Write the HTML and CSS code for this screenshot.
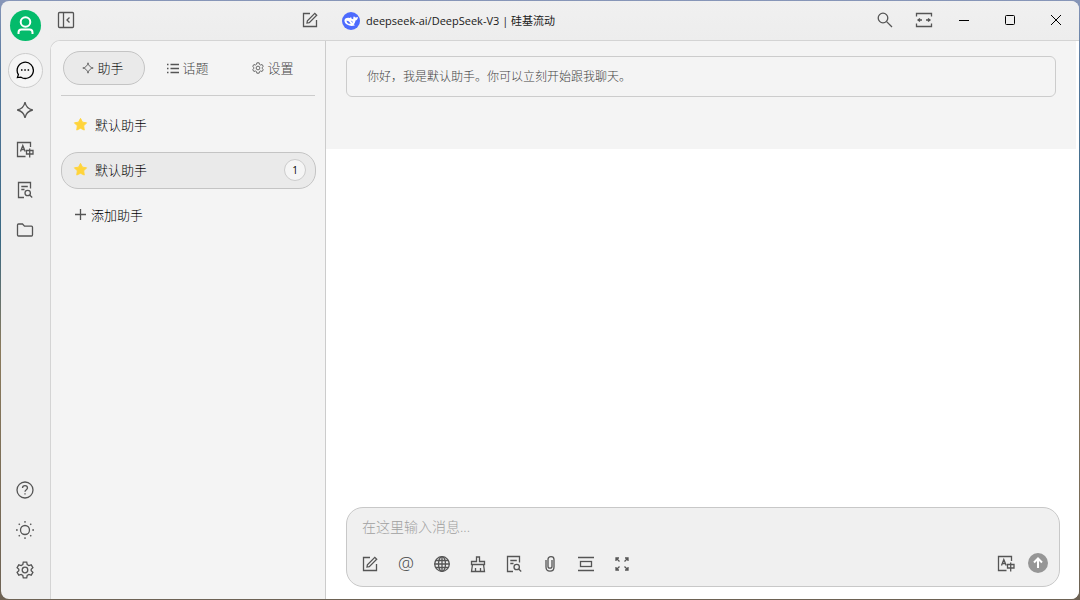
FILE: index.html
```html
<!DOCTYPE html>
<html lang="zh-CN">
<head>
<meta charset="utf-8">
<meta name="viewport" content="width=device-width, initial-scale=1">
<title>deepseek-ai/DeepSeek-V3 | 硅基流动</title>
<link rel="stylesheet" href="styles.css">
</head>
<body>
<svg class="sprite" aria-hidden="true">
  <symbol id="sparkle" viewBox="0 0 18 18"><path d="M9 1.200C9.800 5.600 12.400 8.200 16.800 9 12.400 9.800 9.800 12.400 9 16.800 8.200 12.400 5.600 9.800 1.200 9 5.600 8.200 8.200 5.600 9 1.200Z"/></symbol>
  <symbol id="translate" viewBox="0 0 18 18"><path d="M14.500 6V1.500H1.500V15.500H9.500M4.500 10.500 6.800 4.500 9.200 10.500M5.300 8.500H8.400M10.500 9.500H17V13H10.500ZM13.700 7.500V16.500"/></symbol>
  <symbol id="docsearch" viewBox="0 0 18 18"><path d="M14.500 7.500V1.500H2.500V16.500H8M5.300 5.500H11.800M5.300 8.500H8.500"/><circle cx="11.700" cy="12" r="2.700"/><path d="M13.700 14 16.200 16.500"/></symbol>
  <symbol id="gear" viewBox="0 0 18 18"><circle cx="9" cy="9" r="2.800"/><path d="M7.300 1.200H10.700L11.200 3.500 12.900 4.500 15.200 3.800 16.900 6.700 15.200 8.200V9.800L16.900 11.300 15.200 14.200 12.900 13.500 11.200 14.500 10.700 16.800H7.300L6.800 14.500 5.100 13.500 2.800 14.200 1.100 11.300 2.800 9.800V8.200L1.100 6.700 2.800 3.800 5.100 4.500 6.800 3.500Z"/></symbol>
  <symbol id="compose" viewBox="0 0 18 18"><path d="M9 2.500H2.500V15.500H15.500V9"/><path d="M6 12 6.400 9.700 13.800 2.300 15.700 4.200 8.300 11.600Z"/></symbol>
  <symbol id="star" viewBox="0 0 16 16"><path d="M8 1.500 10.100 5.500 14.500 6.200 11.400 9.400 12 13.900 8 12 4 13.900 4.600 9.400 1.500 6.200 5.900 5.500Z"/></symbol>
</svg>

<div class="window">
  <nav class="rail">
    <button class="avatar" aria-label="用户"><svg viewBox="0 0 31 31"><circle cx="15.500" cy="12" r="4.800"/><path d="M8.500 24V22.500Q8.500 19.500 11.500 19.500H19.500Q22.500 19.500 22.500 22.500V24"/></svg></button>
    <button class="rail-btn active" aria-label="聊天"><svg class="icon i20" viewBox="0 0 20 20"><path d="M2.400 17.600 3.400 14.600A8.100 8.100 0 1 1 6 17.200Z"/><path d="M6 10H7.500M9.300 10H10.800M12.600 10H14.100"/></svg></button>
    <button class="rail-btn" aria-label="智能体"><svg class="icon i18"><use href="#sparkle"/></svg></button>
    <button class="rail-btn" aria-label="翻译"><svg class="icon i18"><use href="#translate"/></svg></button>
    <button class="rail-btn" aria-label="知识库"><svg class="icon i18"><use href="#docsearch"/></svg></button>
    <button class="rail-btn" aria-label="文件"><svg class="icon i18" viewBox="0 0 18 18"><path d="M1.500 4Q1.500 3 2.500 3H6.500L8.500 5.200H15.500Q16.500 5.200 16.500 6.200V14Q16.500 15 15.500 15H2.500Q1.500 15 1.500 14Z"/></svg></button>
    <span class="spacer"></span>
    <button class="rail-btn" aria-label="帮助"><svg class="icon i18" viewBox="0 0 18 18"><circle cx="9" cy="9" r="8"/><path d="M6.500 7Q6.500 4.700 9 4.700T11.500 7C11.500 8.700 9 8.700 9 10.700M9 12.200V13.500"/></svg></button>
    <button class="rail-btn" aria-label="主题"><svg class="icon i18" viewBox="0 0 18 18"><circle cx="9" cy="9" r="4.500"/><path d="M9 0V1.700M9 16.300V18M0 9H1.700M16.300 9H18M2.700 2.700 3.800 3.800M14.200 14.200 15.300 15.300M2.700 15.300 3.800 14.200M14.200 3.800 15.300 2.700"/></svg></button>
    <button class="rail-btn" aria-label="设置"><svg class="icon i18"><use href="#gear"/></svg></button>
  </nav>

  <div class="body">
    <header class="titlebar">
      <div class="titlebar-side">
        <button class="tool" aria-label="收起侧栏"><svg class="icon i18" viewBox="0 0 18 18"><rect x="1.500" y="1.500" width="15" height="15" rx="1"/><path d="M6.500 1.500V16.500M12.500 6.500 10 9 12.500 11.500"/></svg></button>
        <button class="tool" aria-label="新建话题"><svg class="icon i18"><use href="#compose"/></svg></button>
      </div>
      <div class="titlebar-main">
        <button class="model">
          <svg class="logo" viewBox="0 0 18 18"><circle cx="9" cy="9" r="9"/><path d="M2.500 8C3.200 6 5.500 5.300 7.700 6.100L9.200 5.100C9 6.600 10.200 7.200 11.300 7.300 11 5.900 11.500 4.700 12 4.300 12.300 5.100 13 5.500 13.800 5.400L16 4.900C15.800 7.200 14.700 8.100 13.500 8.500 13.300 10.500 12.400 11.700 11.700 12.300L13 13.300C10.800 14.200 7.400 14.300 5 12.600 3.200 11.500 2.200 9.800 2.500 8Z"/><path class="cut" d="M4.500 8.700C6.400 8.500 7.500 9.800 8.700 11.700 7 12.300 4.700 11.200 4.500 8.700ZM8.600 8.200 10.700 9.700 10.500 11Z"/></svg>
          <span>deepseek-ai/DeepSeek-V3 | 硅基流动</span>
        </button>
        <div class="window-tools">
          <button class="tool" aria-label="搜索"><svg class="icon i18" viewBox="0 0 18 18"><circle cx="7" cy="7" r="4.800"/><path d="M10.600 10.600 16 16"/></svg></button>
          <button class="tool" aria-label="窄屏"><svg class="icon i18" viewBox="0 0 18 18"><path d="M1.500 5.500V2.500H16.500V5.500M1.500 12.500V15.500H16.500V12.500M3 9H7M11 9H15M5 7.500 3 9 5 10.500M13 7.500 15 9 13 10.500"/></svg></button>
        </div>
        <div class="window-controls">
          <button aria-label="最小化"><svg viewBox="0 0 12 12"><path d="M1 6.500H11"/></svg></button>
          <button aria-label="最大化"><svg viewBox="0 0 12 12"><rect x="1.500" y="1.500" width="9" height="9" rx="1"/></svg></button>
          <button aria-label="关闭"><svg viewBox="0 0 12 12"><path d="M1 1 11 11M11 1 1 11"/></svg></button>
        </div>
      </div>
    </header>

    <div class="content">
      <aside class="panel">
        <div class="tabs">
          <button class="tab selected"><svg class="icon i12"><use href="#sparkle"/></svg>助手</button>
          <button class="tab"><svg class="icon i12" viewBox="0 0 12 12"><path d="M0 2.500H1.500M0 6.500H1.500M0 10.500H1.500M3.500 2.500H12M3.500 6.500H12M3.500 10.500H12"/></svg>话题</button>
          <button class="tab"><svg class="icon i12"><use href="#gear"/></svg>设置</button>
        </div>
        <div class="assistants">
          <button class="assistant"><svg class="star"><use href="#star"/></svg>默认助手</button>
          <button class="assistant current"><svg class="star"><use href="#star"/></svg>默认助手<span class="count">1</span></button>
          <button class="assistant add"><svg class="icon i12" viewBox="0 0 12 12"><path d="M5.500 0V11M0 5.500H11"/></svg>添加助手</button>
        </div>
      </aside>

      <main class="chat">
        <section class="messages"><p class="prompt">你好，我是默认助手。你可以立刻开始跟我聊天。</p></section>
        <form class="composer">
          <textarea rows="1" aria-label="消息" placeholder="在这里输入消息..."></textarea>
          <div class="actions">
            <button type="button" aria-label="新话题"><svg class="icon i18"><use href="#compose"/></svg></button>
            <button type="button" class="at" aria-label="提及模型">@</button>
            <button type="button" aria-label="联网"><svg class="icon i18" viewBox="0 0 18 18"><circle cx="9" cy="9" r="7.300"/><ellipse cx="9" cy="9" rx="3.500" ry="7.300"/><path d="M9 1.500V16.500M1.500 9H16.500M2.500 5.500H15.500M2.500 12.500H15.500"/></svg></button>
            <button type="button" aria-label="清空"><svg class="icon i18" viewBox="0 0 18 18"><path d="M2.500 9.500V6.500H7.500V2H10.500V6.500H15.500V9.500ZM3.500 9.500 2.500 16.500H15.500L14.500 9.500M6.500 16V13M11.500 16V13"/></svg></button>
            <button type="button" aria-label="知识库"><svg class="icon i18"><use href="#docsearch"/></svg></button>
            <button type="button" aria-label="附件"><svg class="icon i18" viewBox="0 0 18 18"><path d="M11 5V11.500Q11 13.200 9 13.200T7 11.500V4.500Q7 1.700 10 1.700T13 4.500V12Q13 16.200 9 16.200T5 12V5"/></svg></button>
            <button type="button" aria-label="清除上下文"><svg class="icon i18" viewBox="0 0 18 18"><path d="M1 2.500H17M1 15.500H17"/><rect x="3.500" y="6.500" width="11" height="5"/></svg></button>
            <button type="button" aria-label="展开"><svg class="icon i18" viewBox="0 0 18 18"><path d="M6.500 6.500 3 3M3 6V3H6M11.500 6.500 15 3M12 3H15V6M6.500 11.500 3 15M3 12V15H6M11.500 11.500 15 15M15 12V15H12"/></svg></button>
            <span class="spacer"></span>
            <button type="button" aria-label="翻译"><svg class="icon i18"><use href="#translate"/></svg></button>
            <button type="submit" class="send" aria-label="发送"><svg viewBox="0 0 20 20"><circle cx="10" cy="10" r="10"/><path d="M10 15V6M6 9.500 10 5.500 14 9.500"/></svg></button>
          </div>
        </form>
      </main>
    </div>
  </div>
</div>
</body>
</html>
```
FILE: styles.css
```css
* { box-sizing: border-box; }

body {
  margin: 0;
  min-height: 100vh;
  padding: 1px;
  display: flex;
  background: linear-gradient(#8796b8, #54779c 12%, #396882 40%, #8a7a5c 58%, #6d6254);
  color: #000;
  font: 300 13px/20px "Open Sans", "Noto Sans CJK SC", sans-serif;
}

button {
  margin: 0;
  padding: 0;
  border: 0;
  background: none;
  color: inherit;
  font: inherit;
  display: flex;
  align-items: center;
  justify-content: center;
}

svg { display: block; flex: none; }
.sprite { position: absolute; width: 0; height: 0; }
.icon { fill: none; stroke: #555; stroke-width: 1.3px; }
.i12 { width: 12px; height: 12px; }
.i18 { width: 18px; height: 18px; }
.i20 { width: 20px; height: 20px; }
.spacer { flex: 1; }

.window {
  flex: 1;
  display: flex;
  border-radius: 8px;
  overflow: hidden;
  background: #efefef;
}

/* Icon rail */
.rail {
  width: 49px;
  padding: 9px 0 11px;
  display: flex;
  flex-direction: column;
  align-items: center;
  gap: 5px;
}
.avatar {
  width: 31px;
  height: 31px;
  margin-bottom: 7px;
  border-radius: 50%;
  background: #04bb6b;
}
.avatar svg { width: 31px; height: 31px; fill: none; stroke: #fff; stroke-width: 2px; }
.rail-btn {
  width: 35px;
  height: 35px;
  padding: 0 1px 1px 0;
  border: 1px solid transparent;
  border-radius: 50%;
}
.rail-btn.active { background: #f5f5f5; border-color: #ccc; }
.active .icon { stroke: #000; }

.body { flex: 1; min-width: 0; display: flex; flex-direction: column; }

/* Title bar */
.titlebar { height: 39px; display: flex; background: linear-gradient(#f0f0f0, #ededed); }
.titlebar-side {
  width: 276px;
  padding: 0 6px 2px;
  display: flex;
  align-items: center;
  justify-content: space-between;
}
.titlebar-main { flex: 1; display: flex; align-items: center; padding-left: 16px; }
.tool { width: 20px; height: 20px; }
.model { gap: 6px; font-size: 11px; font-weight: 400; color: #1a1a1a; }
.logo { width: 18px; height: 18px; fill: #4d6bfe; }
.logo path { fill: #fff; }
.logo .cut { fill: #4d6bfe; }
.window-tools { margin-left: auto; display: flex; gap: 19px; padding: 0 7px 2px 0; }
.window-controls { display: flex; align-self: stretch; }
.window-controls button { width: 46px; padding-bottom: 1px; }
.window-controls svg { width: 12px; height: 12px; fill: none; stroke: #000; stroke-width: 1px; }

/* Content */
.content {
  flex: 1;
  display: flex;
  border: solid #d4d4d4;
  border-width: 1px 0 0 1px;
  border-top-left-radius: 10px;
  overflow: hidden;
  background: #fff;
}
.panel {
  width: 275px;
  padding: 10px 9px 10px 10px;
  border-right: 1px solid #ccc;
  background: #f4f4f4;
}
.tabs {
  display: flex;
  gap: 3px;
  margin-right: 1px;
  padding: 0 0 10px 2px;
  border-bottom: 1px solid #ccc;
}
.tab {
  width: 82px;
  height: 34px;
  padding-right: 2px;
  gap: 3px;
  border: 1px solid transparent;
  border-radius: 17px;
  color: #444;
}
.tab.selected { background: #eaeaea; border-color: #c4c4c4; color: #111; }
.assistants { display: flex; flex-direction: column; gap: 8px; padding-top: 11px; }
.assistant {
  height: 37px;
  padding: 0 9px 2px 11px;
  justify-content: flex-start;
  gap: 7px;
  border: 1px solid transparent;
  border-radius: 17px;
}
.assistant.current { background: #eaeaea; border-color: #c4c4c4; }
.assistant.add { gap: 4px; padding-left: 13px; }
.star { width: 15px; height: 15px; fill: #ffd43b; stroke: #ffd43b; stroke-width: 1px; stroke-linejoin: round; }
.count {
  width: 22px;
  height: 22px;
  margin-left: auto;
  border: 1px solid #ccc;
  border-radius: 50%;
  background: #f5f5f5;
  font-size: 10px;
  font-weight: 400;
  text-align: center;
}

.chat { flex: 1; min-width: 0; display: flex; flex-direction: column; }
.messages { margin-right: 3px; padding: 15px 20px 52px; background: #f4f4f4; }
.prompt {
  margin: 0;
  padding: 10px 20px;
  border: 1px solid #ccc;
  border-radius: 6px;
  color: #444;
  font-size: 12px;
  line-height: 19px;
}
.composer {
  margin: auto 19px 12px 20px;
  padding: 9px 11px 7px;
  border: 1px solid #c8c8c8;
  border-radius: 17px;
  background: #f0f0f0;
}
textarea {
  display: block;
  width: 100%;
  height: 20px;
  padding: 0 4px;
  border: 0;
  outline: 0;
  resize: none;
  overflow: hidden;
  background: none;
  font: inherit;
  font-size: 14px;
}
textarea::placeholder { color: #a0a0a0; }
.actions { display: flex; align-items: center; gap: 12px; padding-top: 12px; }
.actions button { width: 24px; height: 30px; }
.actions .at { padding-bottom: 2px; color: #444; font-size: 18px; }
.actions .send { width: 20px; padding-bottom: 2px; }
.actions .spacer + button { margin-right: -2px; }
.send svg { width: 20px; height: 20px; fill: #969696; }
.send path { fill: none; stroke: #fff; stroke-width: 2px; }
```
